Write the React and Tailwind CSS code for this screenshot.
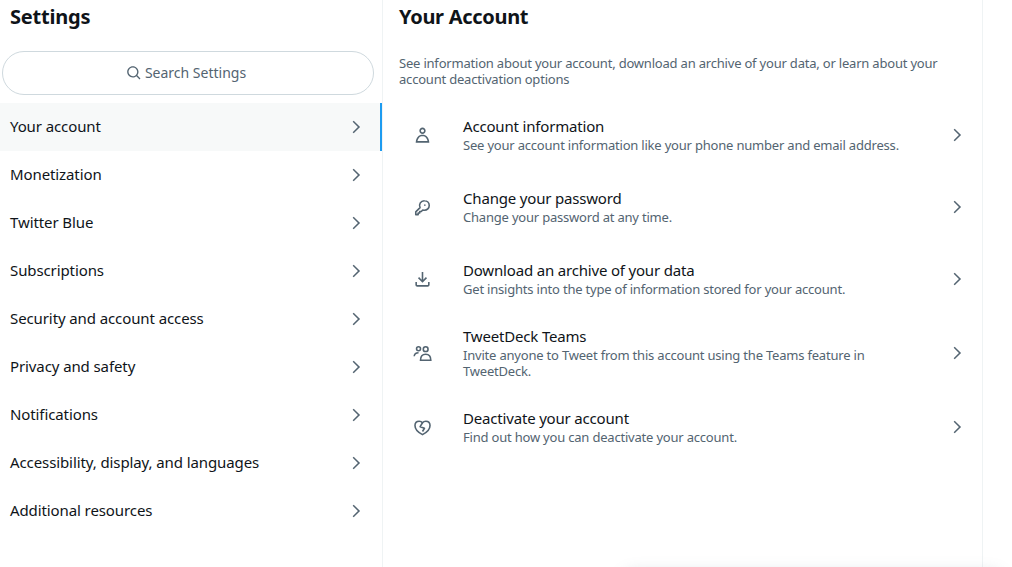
const navItems = [
  "Your account",
  "Monetization",
  "Twitter Blue",
  "Subscriptions",
  "Security and account access",
  "Privacy and safety",
  "Notifications",
  "Accessibility, display, and languages",
  "Additional resources",
];

const Chevron = ({ className }) => (
  <svg viewBox="0 0 24 24" className={className} fill="currentColor">
    <path d="M14.586 12L7.543 4.96l1.414-1.42L17.414 12l-8.457 8.46-1.414-1.42L14.586 12z" />
  </svg>
);

const PersonIcon = () => (
  <svg viewBox="0 0 24 24" className="w-[19px] h-[19px]" fill="currentColor">
    <path d="M5.651 19h12.698c-.337-1.8-1.023-3.21-1.945-4.19C15.318 13.65 13.838 13 12 13s-3.317.65-4.404 1.81c-.922.98-1.608 2.39-1.945 4.19zm.486-5.56C7.627 11.85 9.648 11 12 11s4.373.85 5.863 2.44c1.477 1.58 2.366 3.8 2.632 6.46l.11 1.1H3.395l.11-1.1c.266-2.66 1.155-4.88 2.632-6.46zM12 4c-1.105 0-2 .9-2 2s.895 2 2 2 2-.9 2-2-.895-2-2-2zM8 6c0-2.21 1.791-4 4-4s4 1.79 4 4-1.791 4-4 4-4-1.79-4-4z" />
  </svg>
);

const KeyIcon = () => (
  <svg viewBox="0 0 24 24" className="w-[19px] h-[19px]" fill="none" stroke="currentColor" strokeWidth="2" strokeLinejoin="round">
    <path d="M14.5 3.5a6 6 0 0 1 6 6 6 6 0 0 1-6 6c-.8 0-1.5-.1-2.200-.4L10.500 17H8.500v2H6.500v2H3.500v-3.500l5.400-5.300a6 6 0 0 1 5.600-8.700z" />
    <circle cx="15" cy="9" r="1" fill="currentColor" stroke="none" />
  </svg>
);

const DownloadIcon = () => (
  <svg viewBox="0 0 24 24" className="w-[19px] h-[19px]" fill="currentColor">
    <path d="M11.99 16l-5.7-5.7L7.7 8.88l3.29 3.3V2.59h2v9.59l3.3-3.3 1.41 1.42-5.71 5.7zM21 15l-.02 3.51c0 1.38-1.12 2.49-2.5 2.49H5.5C4.11 21 3 19.88 3 18.5V15h2v3.5c0 .28.22.5.5.5h12.98c.28 0 .5-.22.5-.5L19 15h2z" />
  </svg>
);

const TeamIcon = () => (
  <svg viewBox="0 0 24 24" className="w-[19px] h-[19px]" fill="none" stroke="currentColor" strokeWidth="2">
    <circle cx="7" cy="6" r="2.500" />
    <circle cx="16" cy="6.500" r="3" />
    <path d="M9.500 20.500c0-5 2.500-7.500 6.500-7.500s6.500 2.500 6.500 7.500z" />
    <path d="M1.500 15.500c.300-3 2.500-4.500 5.500-4.500" />
  </svg>
);

const BrokenHeartIcon = () => (
  <svg viewBox="0 0 24 24" className="w-[19px] h-[19px]" fill="none" stroke="currentColor" strokeWidth="2" strokeLinejoin="round">
    <path d="M12 21c-3-1.500-9.500-5.500-9.500-11.500C2.500 6 5 4 7.800 4c1.700 0 3.200.7 4.200 2 1-1.300 2.500-2 4.200-2 2.800 0 5.300 2 5.300 5.500C21.500 15.500 15 19.500 12 21z" />
    <path d="M12 6L9 11l5.500 2-2.500 4" />
  </svg>
);

const accountRows = [
  {
    icon: <PersonIcon />,
    title: "Account information",
    desc: "See your account information like your phone number and email address.",
    spacing: "mb-[6px]",
  },
  {
    icon: <KeyIcon />,
    title: "Change your password",
    desc: "Change your password at any time.",
    spacing: "mb-[6px]",
  },
  {
    icon: <DownloadIcon />,
    title: "Download an archive of your data",
    desc: "Get insights into the type of information stored for your account.",
    spacing: "",
  },
  {
    icon: <TeamIcon />,
    title: "TweetDeck Teams",
    desc: "Invite anyone to Tweet from this account using the Teams feature in TweetDeck.",
    spacing: "",
  },
  {
    icon: <BrokenHeartIcon />,
    title: "Deactivate your account",
    desc: "Find out how you can deactivate your account.",
    spacing: "",
  },
];

export default function App() {
  return (
    <div className="relative flex h-[567px] w-[1012px] overflow-hidden bg-white text-[#0f1419] font-['Noto_Sans',sans-serif]">
      <aside className="w-[383px] shrink-0 border-r border-[#eff3f4]">
        <h2 className="h-[34px] px-[10px] pt-[3px] text-[20px] leading-[28px] font-bold tracking-[-0.2px]">Settings</h2>
        <div className="mt-[17px] ml-[2px] mr-[8px] flex h-[44px] items-center justify-center gap-[3px] rounded-full border border-[#cfd9de] pr-[4px] text-[#536471]">
          <svg viewBox="0 0 24 24" className="w-[16px] h-[16px]" fill="currentColor">
            <path d="M10.250 3.750c-3.590 0-6.500 2.910-6.500 6.500s2.910 6.500 6.500 6.500c1.795 0 3.419-.726 4.596-1.904 1.178-1.177 1.904-2.801 1.904-4.596 0-3.590-2.910-6.500-6.500-6.500zm-8.500 6.500c0-4.694 3.806-8.500 8.500-8.500s8.500 3.806 8.500 8.500c0 1.986-.682 3.815-1.824 5.262l4.781 4.781-1.414 1.414-4.781-4.781c-1.447 1.142-3.276 1.824-5.262 1.824-4.694 0-8.500-3.806-8.500-8.500z" />
          </svg>
          <span className="text-[14px] leading-[20px]">Search Settings</span>
        </div>
        <nav className="mt-[8px]">
          {navItems.map((item, i) => (
            <div
              key={item}
              className={
                i === 0
                  ? "flex h-[48px] items-center justify-between bg-[#f7f9f9] border-r-2 border-[#1d9bf0] pl-[10px] pr-[15px]"
                  : "flex h-[48px] items-center justify-between pl-[10px] pr-[17px]"
              }
            >
              <span className="pb-[2px] text-[15px] leading-[20px] tracking-[-0.1px]">{item}</span>
              <Chevron className="w-[18px] h-[18px] text-[#536471]" />
            </div>
          ))}
        </nav>
      </aside>

      <main className="w-[600px] shrink-0 border-r border-[#eff3f4]">
        <h2 className="h-[34px] px-[16px] pt-[3px] text-[20px] leading-[28px] font-bold tracking-[-0.3px]">Your Account</h2>
        <p className="mt-[21px] px-[16px] text-[13px] leading-[16px] tracking-[-0.2px] text-[#536471]">
          See information about your account, download an archive of your data, or learn about your account deactivation options
        </p>
        <div className="mt-[15px]">
          {accountRows.map((row) => (
            <div key={row.title} className={`flex items-center py-[15px] pl-[30px] pr-[16px] ${row.spacing}`}>
              <div className="w-[50px] shrink-0 text-[#536471]">{row.icon}</div>
              <div className="flex-1 min-w-0">
                <div className="mb-[2px] text-[15px] leading-[18px] tracking-[-0.18px]">{row.title}</div>
                <div className="text-[13px] leading-[16px] tracking-[-0.2px] text-[#536471]">{row.desc}</div>
              </div>
              <Chevron className="ml-[24px] w-[18px] h-[18px] shrink-0 text-[#536471]" />
            </div>
          ))}
        </div>
      </main>

      {/* message drawer peeking in from below */}
      <div className="absolute left-[620px] top-[571px] h-[50px] w-[385px] rounded-t-2xl bg-white shadow-[0_0_15px_rgba(101,119,134,0.2)]" />
    </div>
  );
}
